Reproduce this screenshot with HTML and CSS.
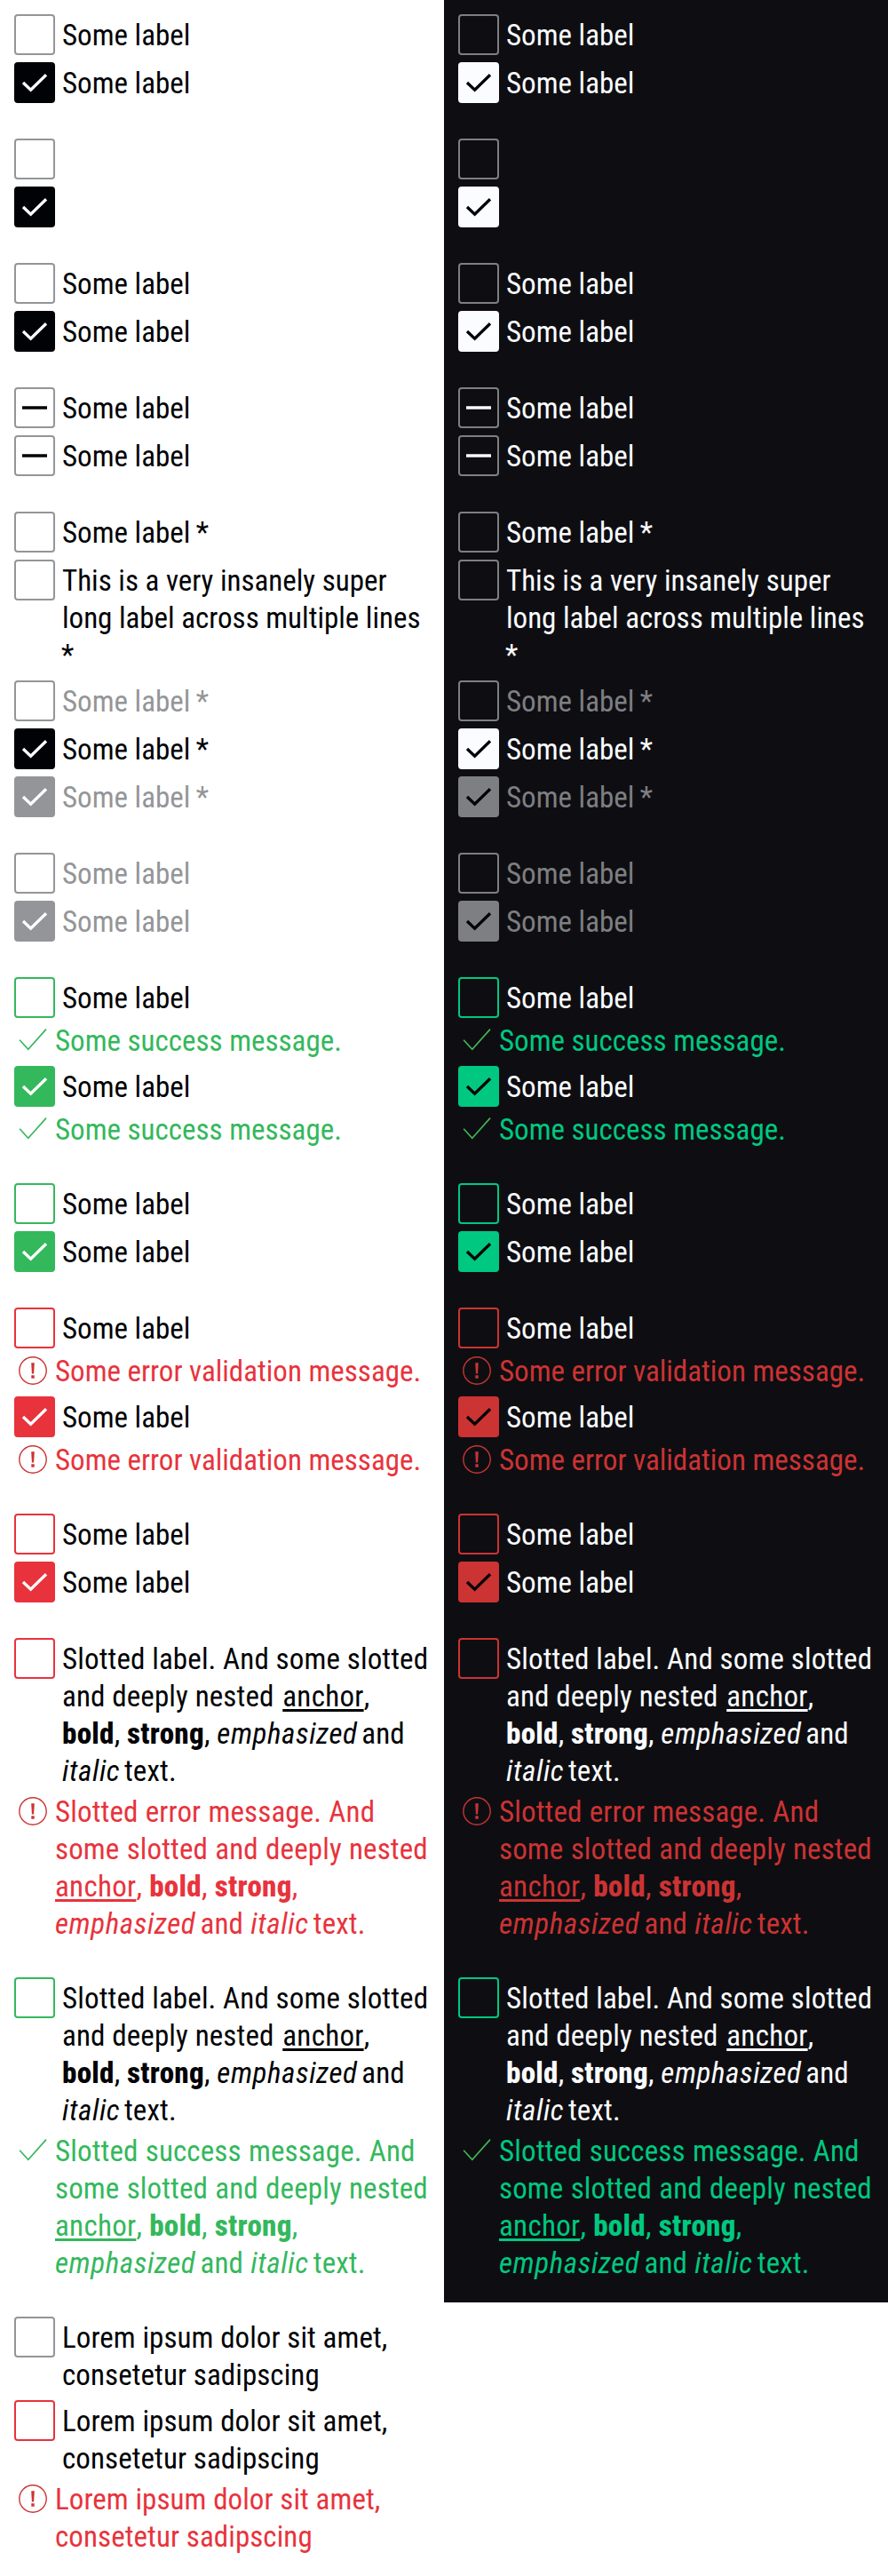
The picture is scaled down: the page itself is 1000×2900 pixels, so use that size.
FILE: index.html
```html
<!DOCTYPE html>
<html lang="en">
<head>
<meta charset="utf-8">
<title>Checkbox states</title>
<link rel="stylesheet" href="styles.css">
</head>
<body>
<svg class="sprite" aria-hidden="true">
  <symbol id="check" viewBox="0 0 46 46"><path d="M10 23 18.6 31.1 36 14.2" fill="none" stroke="currentColor" stroke-width="3.3"/></symbol>
  <symbol id="minus" viewBox="0 0 46 46"><path d="M9 23H37" stroke="currentColor" stroke-width="3.5"/></symbol>
  <symbol id="success" viewBox="0 0 42 42"><path d="M6.1 20.7 15.8 31.4 36 8.6" fill="none" stroke="currentColor" stroke-width="1.6"/></symbol>
  <symbol id="error" viewBox="0 0 42 42"><circle cx="21" cy="21" r="15.2" fill="none" stroke="currentColor" stroke-width="1.4"/><path d="M19.2 12.2h3.6l-.7 12.2h-2.2zM19.3 26.3h3.4v3.4h-3.4z" fill="currentColor"/></symbol>
</svg>

<div class="row">
<section class="panel light">
  <div class="group">
    <div class="field"><span class="box"></span><span class="label">Some label</span></div>
    <div class="field"><span class="box checked"><svg><use href="#check"/></svg></span><span class="label">Some label</span></div>
  </div>
  <div class="group">
    <div class="field"><span class="box"></span></div>
    <div class="field"><span class="box checked"><svg><use href="#check"/></svg></span></div>
  </div>
  <div class="group">
    <div class="field"><span class="box"></span><span class="label">Some label</span></div>
    <div class="field"><span class="box checked"><svg><use href="#check"/></svg></span><span class="label">Some label</span></div>
  </div>
  <div class="group">
    <div class="field"><span class="box"><svg><use href="#minus"/></svg></span><span class="label">Some label</span></div>
    <div class="field"><span class="box"><svg><use href="#minus"/></svg></span><span class="label">Some label</span></div>
  </div>
  <div class="group">
    <div class="field"><span class="box"></span><span class="label">Some label <span class="star">*</span></span></div>
    <div class="field"><span class="box"></span><span class="label">This is a very insanely super long label across multiple lines <span class="star">*</span></span></div>
    <div class="field disabled"><span class="box"></span><span class="label">Some label <span class="star">*</span></span></div>
    <div class="field"><span class="box checked"><svg><use href="#check"/></svg></span><span class="label">Some label <span class="star">*</span></span></div>
    <div class="field disabled"><span class="box checked"><svg><use href="#check"/></svg></span><span class="label">Some label <span class="star">*</span></span></div>
  </div>
  <div class="group">
    <div class="field disabled"><span class="box"></span><span class="label">Some label</span></div>
    <div class="field disabled"><span class="box checked"><svg><use href="#check"/></svg></span><span class="label">Some label</span></div>
  </div>
  <div class="group">
    <div class="field success"><span class="box"></span><span class="label">Some label</span>
      <p class="message"><svg><use href="#success"/></svg><span>Some success message.</span></p></div>
    <div class="field success"><span class="box checked"><svg><use href="#check"/></svg></span><span class="label">Some label</span>
      <p class="message"><svg><use href="#success"/></svg><span>Some success message.</span></p></div>
  </div>
  <div class="group">
    <div class="field success"><span class="box"></span><span class="label">Some label</span></div>
    <div class="field success"><span class="box checked"><svg><use href="#check"/></svg></span><span class="label">Some label</span></div>
  </div>
  <div class="group">
    <div class="field error"><span class="box"></span><span class="label">Some label</span>
      <p class="message"><svg><use href="#error"/></svg><span>Some error validation message.</span></p></div>
    <div class="field error"><span class="box checked"><svg><use href="#check"/></svg></span><span class="label">Some label</span>
      <p class="message"><svg><use href="#error"/></svg><span>Some error validation message.</span></p></div>
  </div>
  <div class="group">
    <div class="field error"><span class="box"></span><span class="label">Some label</span></div>
    <div class="field error"><span class="box checked"><svg><use href="#check"/></svg></span><span class="label">Some label</span></div>
  </div>
  <div class="group slotted">
    <div class="field error"><span class="box"></span><span class="label">Slotted label. And some slotted and deeply nested <a href="#">anchor</a>, <b>bold</b>, <strong>strong</strong>, <em>emphasized</em> and <i>italic</i> text.</span>
      <p class="message"><svg><use href="#error"/></svg><span>Slotted error message. And some slotted and deeply nested <a href="#">anchor</a>, <b>bold</b>, <strong>strong</strong>, <em>emphasized</em> and <i>italic</i> text.</span></p></div>
  </div>
  <div class="group slotted">
    <div class="field success"><span class="box"></span><span class="label">Slotted label. And some slotted and deeply nested <a href="#">anchor</a>, <b>bold</b>, <strong>strong</strong>, <em>emphasized</em> and <i>italic</i> text.</span>
      <p class="message"><svg><use href="#success"/></svg><span>Slotted success message. And some slotted and deeply nested <a href="#">anchor</a>, <b>bold</b>, <strong>strong</strong>, <em>emphasized</em> and <i>italic</i> text.</span></p></div>
  </div>
</section>

<section class="panel dark">
  <div class="group">
    <div class="field"><span class="box"></span><span class="label">Some label</span></div>
    <div class="field"><span class="box checked"><svg><use href="#check"/></svg></span><span class="label">Some label</span></div>
  </div>
  <div class="group">
    <div class="field"><span class="box"></span></div>
    <div class="field"><span class="box checked"><svg><use href="#check"/></svg></span></div>
  </div>
  <div class="group">
    <div class="field"><span class="box"></span><span class="label">Some label</span></div>
    <div class="field"><span class="box checked"><svg><use href="#check"/></svg></span><span class="label">Some label</span></div>
  </div>
  <div class="group">
    <div class="field"><span class="box"><svg><use href="#minus"/></svg></span><span class="label">Some label</span></div>
    <div class="field"><span class="box"><svg><use href="#minus"/></svg></span><span class="label">Some label</span></div>
  </div>
  <div class="group">
    <div class="field"><span class="box"></span><span class="label">Some label <span class="star">*</span></span></div>
    <div class="field"><span class="box"></span><span class="label">This is a very insanely super long label across multiple lines <span class="star">*</span></span></div>
    <div class="field disabled"><span class="box"></span><span class="label">Some label <span class="star">*</span></span></div>
    <div class="field"><span class="box checked"><svg><use href="#check"/></svg></span><span class="label">Some label <span class="star">*</span></span></div>
    <div class="field disabled"><span class="box checked"><svg><use href="#check"/></svg></span><span class="label">Some label <span class="star">*</span></span></div>
  </div>
  <div class="group">
    <div class="field disabled"><span class="box"></span><span class="label">Some label</span></div>
    <div class="field disabled"><span class="box checked"><svg><use href="#check"/></svg></span><span class="label">Some label</span></div>
  </div>
  <div class="group">
    <div class="field success"><span class="box"></span><span class="label">Some label</span>
      <p class="message"><svg><use href="#success"/></svg><span>Some success message.</span></p></div>
    <div class="field success"><span class="box checked"><svg><use href="#check"/></svg></span><span class="label">Some label</span>
      <p class="message"><svg><use href="#success"/></svg><span>Some success message.</span></p></div>
  </div>
  <div class="group">
    <div class="field success"><span class="box"></span><span class="label">Some label</span></div>
    <div class="field success"><span class="box checked"><svg><use href="#check"/></svg></span><span class="label">Some label</span></div>
  </div>
  <div class="group">
    <div class="field error"><span class="box"></span><span class="label">Some label</span>
      <p class="message"><svg><use href="#error"/></svg><span>Some error validation message.</span></p></div>
    <div class="field error"><span class="box checked"><svg><use href="#check"/></svg></span><span class="label">Some label</span>
      <p class="message"><svg><use href="#error"/></svg><span>Some error validation message.</span></p></div>
  </div>
  <div class="group">
    <div class="field error"><span class="box"></span><span class="label">Some label</span></div>
    <div class="field error"><span class="box checked"><svg><use href="#check"/></svg></span><span class="label">Some label</span></div>
  </div>
  <div class="group slotted">
    <div class="field error"><span class="box"></span><span class="label">Slotted label. And some slotted and deeply nested <a href="#">anchor</a>, <b>bold</b>, <strong>strong</strong>, <em>emphasized</em> and <i>italic</i> text.</span>
      <p class="message"><svg><use href="#error"/></svg><span>Slotted error message. And some slotted and deeply nested <a href="#">anchor</a>, <b>bold</b>, <strong>strong</strong>, <em>emphasized</em> and <i>italic</i> text.</span></p></div>
  </div>
  <div class="group slotted">
    <div class="field success"><span class="box"></span><span class="label">Slotted label. And some slotted and deeply nested <a href="#">anchor</a>, <b>bold</b>, <strong>strong</strong>, <em>emphasized</em> and <i>italic</i> text.</span>
      <p class="message"><svg><use href="#success"/></svg><span>Slotted success message. And some slotted and deeply nested <a href="#">anchor</a>, <b>bold</b>, <strong>strong</strong>, <em>emphasized</em> and <i>italic</i> text.</span></p></div>
  </div>
</section>
</div>

<div class="row">
<section class="panel light">
  <div class="group lorem">
    <div class="field"><span class="box"></span><span class="label">Lorem ipsum dolor sit amet, consetetur sadipscing</span></div>
    <div class="field error"><span class="box"></span><span class="label">Lorem ipsum dolor sit amet, consetetur sadipscing</span>
      <p class="message"><svg><use href="#error"/></svg><span>Lorem ipsum dolor sit amet, consetetur sadipscing</span></p></div>
  </div>
</section>
</div>
</body>
</html>
```
FILE: styles.css
```css
* { box-sizing: border-box; }

body {
  margin: 0;
  background: #fff;
  font: 400 33px/42px "Roboto Condensed", Roboto, sans-serif;
  font-stretch: 75%;
}

.sprite { display: none; }

.row {
  display: grid;
  grid-template-columns: 500px 500px;
}

.panel {
  display: flex;
  flex-direction: column;
  gap: 40px;
  padding: 16px 14px 24px 16px;
  color: var(--text);
}

.light {
  --bg: #fff;
  --text: #010205;
  --muted: #949598;
  --success: #34b85c;
  --success-icon: #34b65a;
  --error: #e8333c;
  --error-icon: #cc3433;
}

.dark {
  --bg: #0e0e12;
  --text: #fbfcff;
  --muted: #7e7f82;
  --success: #00c880;
  --success-icon: #42b856;
  --error: #cc3333;
  --error-icon: #c93433;
  background: var(--bg);
}

.group {
  display: flex;
  flex-direction: column;
  gap: 8px;
}

.slotted { letter-spacing: 0.13px; }

.lorem { letter-spacing: 0.08px; }

.field {
  --state: var(--muted);
  --fill: var(--text);
  display: grid;
  grid-template-columns: 46px 1fr;
  column-gap: 8px;
}

.success {
  --state: var(--success);
  --fill: var(--success);
  --icon: var(--success-icon);
}

.error {
  --state: var(--error);
  --fill: var(--error);
  --icon: var(--error-icon);
}

.disabled {
  --fill: var(--muted);
  color: var(--muted);
}

.box {
  display: flex;
  width: 46px;
  height: 46px;
  border: 2px solid var(--state);
  border-radius: 4px;
}

.box svg {
  flex: none;
  width: 46px;
  height: 46px;
  margin: -2px;
}

.checked {
  border-color: var(--fill);
  background: var(--fill);
  color: #fff;
}

.dark .checked { color: #010205; }

.label {
  margin-bottom: -1px;
  padding: 3px 3px 0 0;
}

.star { margin-left: -1px; }

.message {
  grid-column: 1 / -1;
  display: grid;
  grid-template-columns: 42px 1fr;
  column-gap: 4px;
  margin: 4px -4px 0 0;
  color: var(--state);
}

.message span {
  margin-bottom: -1px;
  padding-top: 1px;
}

.slotted .message span { word-spacing: 0.5px; }

.message svg {
  width: 42px;
  height: 42px;
  color: var(--icon);
}

a {
  color: inherit;
  letter-spacing: 0.3px;
  text-decoration-thickness: 3px;
  text-underline-offset: 3px;
  text-decoration-skip-ink: none;
}

b, strong {
  font-weight: 800;
  letter-spacing: 0.3px;
}

.slotted .label a { margin-left: 2px; }

em, i {
  margin-right: -3px;
  letter-spacing: 0.6px;
}
```
